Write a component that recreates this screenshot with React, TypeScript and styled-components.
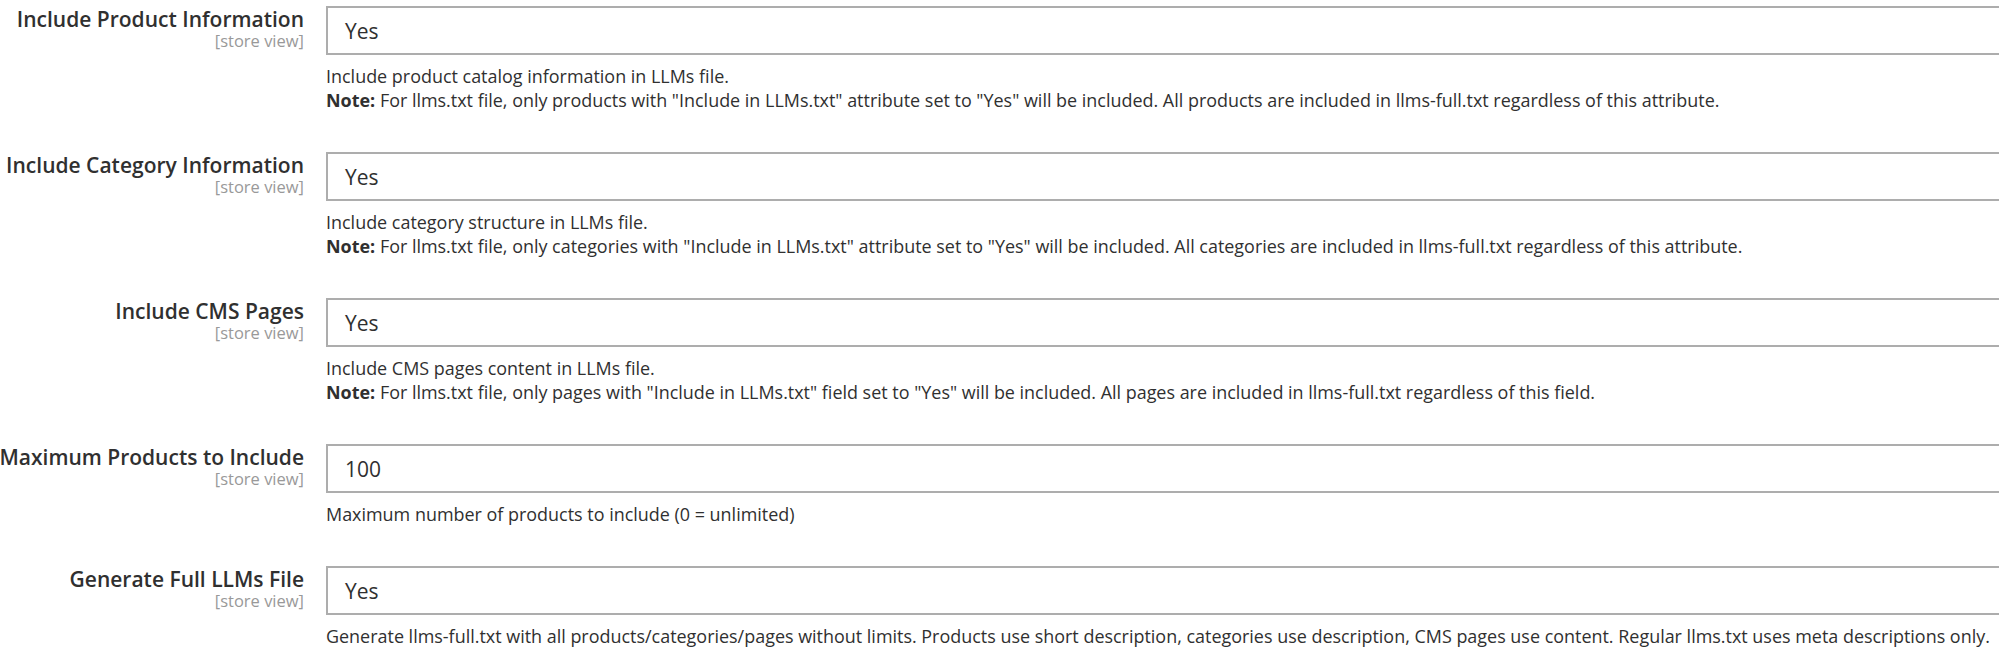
import React from "react";
import styled, { createGlobalStyle } from "styled-components";

const Global = createGlobalStyle`
  html, body {
    margin: 0;
    padding: 0;
    background: #ffffff;
    overflow: hidden;
  }
  body {
    font-family: "Open Sans", "Liberation Sans", sans-serif;
    color: #303030;
  }
`;

const Page = styled.div`
  width: 1999px;
  height: 655px;
  overflow: hidden;
  padding-top: 6px;
  box-sizing: border-box;
`;

const Row = styled.div`
  display: grid;
  grid-template-columns: 304px 1760px;
  column-gap: 22px;
  margin-bottom: 40px;
`;

const LabelCell = styled.div`
  text-align: right;
  display: flex;
  flex-direction: column;
  align-items: flex-end;
`;

const LabelText = styled.span`
  font-size: 21px;
  font-weight: 600;
  line-height: 26px;
  color: #303030;
  white-space: nowrap;
`;

const Scope = styled.span`
  font-size: 16.5px;
  line-height: 18px;
  color: #999999;
  white-space: nowrap;
`;

const Control = styled.div`
  display: flex;
  flex-direction: column;
`;

const Field = styled.div`
  height: 49px;
  box-sizing: border-box;
  border: 2px solid #adadad;
  background: #ffffff;
  padding: 0 17px;
  display: flex;
  align-items: center;
  font-size: 21px;
  color: #303030;
`;

const Help = styled.div`
  margin-top: 9px;
  font-size: 17.95px;
  line-height: 24px;
  color: #303030;
  white-space: nowrap;
`;

const Strong = styled.b`
  font-weight: 700;
`;

type Item = {
  label: string;
  value: string;
  help: string;
  note?: string;
};

const items: Item[] = [
  {
    label: "Include Product Information",
    value: "Yes",
    help: "Include product catalog information in LLMs file.",
    note:
      'For llms.txt file, only products with "Include in LLMs.txt" attribute set to "Yes" will be included. All products are included in llms-full.txt regardless of this attribute.',
  },
  {
    label: "Include Category Information",
    value: "Yes",
    help: "Include category structure in LLMs file.",
    note:
      'For llms.txt file, only categories with "Include in LLMs.txt" attribute set to "Yes" will be included. All categories are included in llms-full.txt regardless of this attribute.',
  },
  {
    label: "Include CMS Pages",
    value: "Yes",
    help: "Include CMS pages content in LLMs file.",
    note:
      'For llms.txt file, only pages with "Include in LLMs.txt" field set to "Yes" will be included. All pages are included in llms-full.txt regardless of this field.',
  },
  {
    label: "Maximum Products to Include",
    value: "100",
    help: "Maximum number of products to include (0 = unlimited)",
  },
  {
    label: "Generate Full LLMs File",
    value: "Yes",
    help:
      "Generate llms-full.txt with all products/categories/pages without limits. Products use short description, categories use description, CMS pages use content. Regular llms.txt uses meta descriptions only.",
  },
];

export default function App() {
  return (
    <>
      <Global />
      <Page>
        {items.map((it) => (
          <Row key={it.label}>
            <LabelCell>
              <LabelText>{it.label}</LabelText>
              <Scope>[store view]</Scope>
            </LabelCell>
            <Control>
              <Field>{it.value}</Field>
              <Help>
                {it.help}
                {it.note && (
                  <>
                    <br />
                    <Strong>Note:</Strong> {it.note}
                  </>
                )}
              </Help>
            </Control>
          </Row>
        ))}
      </Page>
    </>
  );
}
